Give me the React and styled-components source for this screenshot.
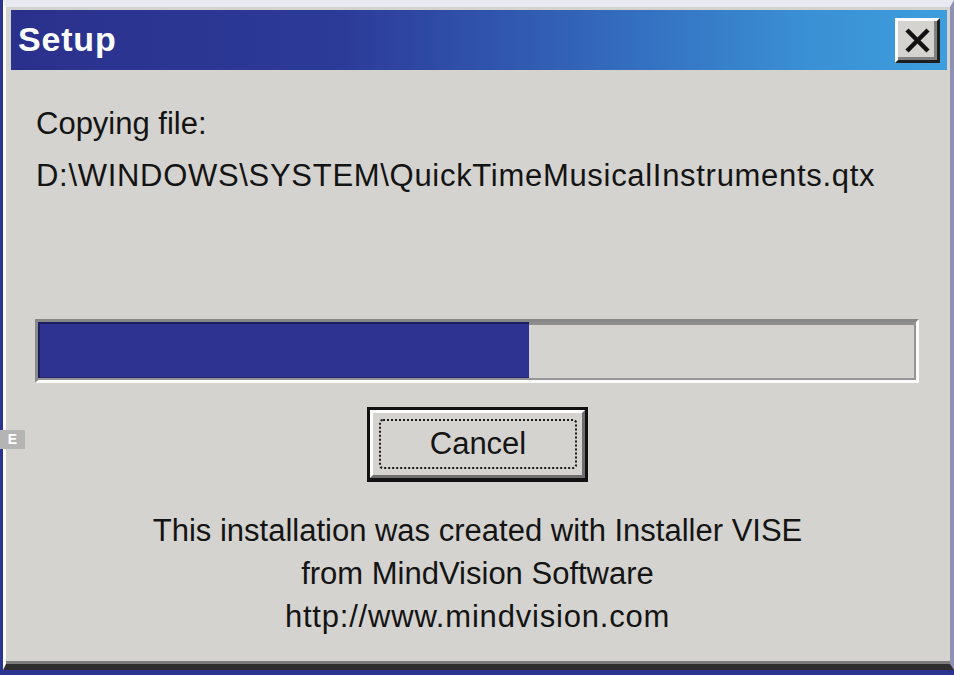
import React from "react";
import styled, { createGlobalStyle } from "styled-components";

const Global = createGlobalStyle`
  html, body { margin: 0; padding: 0; background: #2b3388; }
  body { width: 954px; height: 675px; overflow: hidden; }
  * { box-sizing: border-box; }
`;

const Desktop = styled.div`
  position: relative;
  width: 954px;
  height: 675px;
  padding: 0 0 5px 3px;
  background: #2b3490;
`;

const Window = styled.div`
  display: flex;
  flex-direction: column;
  height: 670px;
  background: #d4d3cf;
  border-top: 7px solid #e9e9f2;
  border-left: 3px solid #fcfcfc;
  border-right: 4px solid #8f90b2;
  border-bottom: 6px solid #2e2e2e;
  box-shadow: inset 0 -3px 0 #7c7c7c;
  padding: 3px 3px 0 5px;
  font-family: "Liberation Sans", Arial, sans-serif;
  color: #141414;
`;

const TitleBar = styled.div`
  display: flex;
  align-items: center;
  justify-content: space-between;
  height: 60px;
  padding: 0 7px 0 7px;
  background: linear-gradient(90deg, #2a318c 0%, #2c3a98 35%, #3366bb 62%, #3a90d4 85%, #3d9edd 100%);
`;

const Title = styled.span`
  color: #ffffff;
  font-weight: bold;
  font-size: 34px;
  letter-spacing: 0.8px;
  margin-top: -1px;
`;

const CloseButton = styled.button`
  display: flex;
  align-items: center;
  justify-content: center;
  width: 45px;
  height: 45px;
  padding: 0;
  background: #d4d3cf;
  border-style: solid;
  border-width: 3px;
  border-color: #fdfdfd #1e1e1e #1e1e1e #fdfdfd;
  box-shadow: inset -3px -3px 0 #808080;
`;

const Body = styled.div`
  display: flex;
  flex-direction: column;
  padding: 28px 28px 0 25px;
`;

const Line = styled.div`
  font-size: 31px;
  line-height: 52px;
  white-space: nowrap;
  letter-spacing: ${(p) => p.$spacing || 0}px;
`;

const Track = styled.div`
  margin-top: 117px;
  margin-left: -1px;
  height: 64px;
  border-style: solid;
  border-width: 3px;
  border-color: #878787 #fbfbfb #fbfbfb #8a8a8a;
  background: #d4d3cf;
  display: flex;
`;

const TrackInner = styled.div`
  flex: 1;
  display: flex;
  border-right: 2px solid #959595;
  border-bottom: 2px solid #959595;
  box-shadow: inset 0 3px 0 #8e8e8e;
`;

const Fill = styled.div`
  height: 100%;
  background: #2e3290;
  box-shadow: inset 2px 2px 0 #1c1f5e, inset 0 -1px 0 #23276e;
`;

const ButtonRow = styled.div`
  display: flex;
  justify-content: center;
  margin-top: 24px;
`;

const Button = styled.button`
  width: 221px;
  height: 75px;
  padding: 0;
  background: #d4d3cf;
  border: 3px solid #111111;
  border-bottom-width: 4px;
  display: flex;
  font-family: inherit;
`;

const ButtonBevel = styled.div`
  flex: 1;
  display: flex;
  padding: 6px 5px 6px 6px;
  border-style: solid;
  border-width: 3px;
  border-color: #fdfdfd #6e6e6e #6e6e6e #fdfdfd;
`;

const Focus = styled.div`
  flex: 1;
  display: flex;
  align-items: center;
  justify-content: center;
  border: 2px dotted #1a1a1a;
  border-radius: 4px;
  font-size: 31px;
  color: #141414;
`;

const Credits = styled.div`
  margin-top: 27px;
  display: flex;
  flex-direction: column;
  align-items: center;
`;

const CreditLine = styled.div`
  font-size: 31px;
  line-height: 43px;
  white-space: nowrap;
  letter-spacing: ${(p) => p.$spacing || 0}px;
`;

const EdgeTab = styled.div`
  position: absolute;
  left: 0;
  top: 430px;
  width: 25px;
  height: 19px;
  background: #b4b4b4;
  color: #ffffff;
  font-family: "Liberation Sans", Arial, sans-serif;
  font-weight: bold;
  font-size: 14px;
  line-height: 19px;
  text-align: center;
`;

const XIcon = () => (
  <svg width="27" height="25" viewBox="0 0 27 25">
    <path d="M3 2 L24 23 M24 2 L3 23" stroke="#111" strokeWidth="4.5" strokeLinecap="butt" />
  </svg>
);

export default function App() {
  const progress = 56;
  return (
    <>
      <Global />
      <Desktop>
        <Window>
          <TitleBar>
            <Title>Setup</Title>
            <CloseButton aria-label="Close">
              <XIcon />
            </CloseButton>
          </TitleBar>
          <Body>
            <Line>Copying file:</Line>
            <Line $spacing={0.7}>D:\WINDOWS\SYSTEM\QuickTimeMusicalInstruments.qtx</Line>
            <Track>
              <TrackInner>
                <Fill style={{ width: `${progress}%` }} />
              </TrackInner>
            </Track>
            <ButtonRow>
              <Button>
                <ButtonBevel>
                  <Focus>Cancel</Focus>
                </ButtonBevel>
              </Button>
            </ButtonRow>
            <Credits>
              <CreditLine>This installation was created with Installer VISE</CreditLine>
              <CreditLine>from MindVision Software</CreditLine>
              <CreditLine $spacing={0.8}>http://www.mindvision.com</CreditLine>
            </Credits>
          </Body>
        </Window>
        <EdgeTab>E</EdgeTab>
      </Desktop>
    </>
  );
}
